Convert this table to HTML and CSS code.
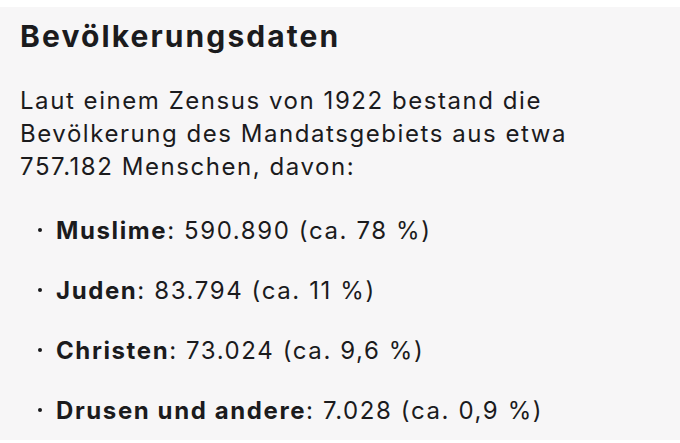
FILE: index.html
```html
<!DOCTYPE html>
<html lang="de">
<head>
<meta charset="utf-8">
<link rel="stylesheet" href="styles.css">
</head>
<body>
<main class="card">
  <h1 class="title">Bevölkerungsdaten</h1>
  <p class="lead">Laut einem Zensus von 1922 bestand die Bevölkerung des Mandatsgebiets aus etwa 757.182 Menschen, davon:</p>
  <ul class="list">
    <li class="item"><span><strong>Muslime</strong>: 590.890 (ca. 78&nbsp;%)</span></li>
    <li class="item"><span><strong>Juden</strong>: 83.794 (ca. 11&nbsp;%)</span></li>
    <li class="item"><span><strong>Christen</strong>: 73.024 (ca. 9,6&nbsp;%)</span></li>
    <li class="item"><span><strong>Drusen und andere</strong>: 7.028 (ca. 0,9&nbsp;%)</span></li>
  </ul>
</main>
</body>
</html>
```
FILE: styles.css
```css
html, body {
  margin: 0;
  padding: 0;
  background: #ffffff;
}
body {
  width: 680px;
  height: 443px;
  overflow: hidden;
  font-family: Inter, "Noto Sans", sans-serif;
  color: #1b1b1d;
}
.card {
  margin-top: 7px;
  height: 433px;
  box-sizing: border-box;
  background: #f7f6f7;
  padding: 11px 20px 0 20px;
  overflow: hidden;
}
.title {
  margin: 0;
  font-size: 30px;
  line-height: 36px;
  font-weight: 700;
  letter-spacing: 2.1px;
}
.lead {
  margin: 30px 0 0 0;
  font-size: 24px;
  line-height: 33px;
  font-weight: 400;
  letter-spacing: 1.55px;
}
.list {
  list-style: none;
  margin: 31px 0 0 0;
  padding: 0;
  display: flex;
  flex-direction: column;
  gap: 27px;
}
.item {
  display: flex;
  align-items: center;
  font-size: 24px;
  line-height: 33px;
  letter-spacing: 1.6px;
}
.item::before {
  content: "";
  width: 4px;
  height: 4px;
  border-radius: 50%;
  background: #1b1b1d;
  margin: -1px 14px 0 18px;
  flex: none;
}
.item strong {
  font-weight: 700;
}
```
